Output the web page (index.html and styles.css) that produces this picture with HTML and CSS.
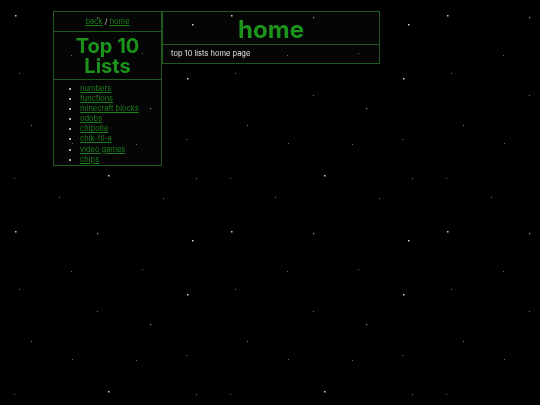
FILE: index.html
```html
<!DOCTYPE html>
<html lang="en">
<head>
<meta charset="utf-8">
<title>home</title>
<link rel="stylesheet" href="styles.css">
</head>
<body>
<svg class="sky" width="540" height="405" aria-hidden="true">
  <defs>
    <pattern id="stars" width="216" height="216" patternUnits="userSpaceOnUse">
      <rect x="15" y="15" width="1.5" height="1.5" fill="#d0d0d0"/>
      <rect x="97" y="17" width="1.2" height="1.2" fill="#999"/>
      <rect x="192" y="24" width="1.5" height="1.5" fill="#d0d0d0"/>
      <rect x="142" y="53" width="1" height="1" fill="#666"/>
      <rect x="71" y="55" width="1" height="1" fill="#666"/>
      <rect x="19" y="73" width="1" height="1" fill="#777"/>
      <rect x="187" y="78" width="1.5" height="1.5" fill="#d0d0d0"/>
      <rect x="97" y="95" width="1" height="1" fill="#777"/>
      <rect x="150" y="108" width="1.2" height="1.2" fill="#888"/>
      <rect x="31" y="125" width="1" height="1" fill="#777"/>
      <rect x="186" y="139" width="1" height="1" fill="#666"/>
      <rect x="72" y="143" width="1" height="1" fill="#666"/>
      <rect x="136" y="144" width="1" height="1" fill="#666"/>
      <rect x="108" y="175" width="1.5" height="1.5" fill="#d0d0d0"/>
      <rect x="14" y="178" width="1" height="1" fill="#666"/>
      <rect x="196" y="178" width="1" height="1" fill="#777"/>
      <rect x="59" y="197" width="1" height="1" fill="#777"/>
      <rect x="163" y="198" width="1" height="1" fill="#777"/>
    </pattern>
  </defs>
  <rect width="540" height="405" fill="url(#stars)"/>
</svg>
<div class="page">
  <aside class="sidebar">
    <nav class="crumbs"><a href="#">back</a> / <a href="#">home</a></nav>
    <div class="brand">Top 10 Lists</div>
    <ul class="lists">
      <li><a href="#">numbers</a></li>
      <li><a href="#">functions</a></li>
      <li><a href="#">minecraft blocks</a></li>
      <li><a href="#">odobs</a></li>
      <li><a href="#">chipotle</a></li>
      <li><a href="#">chik-fil-a</a></li>
      <li><a href="#">video games</a></li>
      <li><a href="#">chips</a></li>
    </ul>
  </aside>
  <main class="main">
    <h1 class="heading">home</h1>
    <p class="desc">top 10 lists home page</p>
  </main>
</div>
</body>
</html>
```

FILE: styles.css
```css
html, body {
  margin: 0;
  padding: 0;
  background: #000;
}
body {
  font-family: Inter, "DejaVu Sans", sans-serif;
  color: #e0e0e0;
  width: 540px;
  height: 405px;
  overflow: hidden;
}
.sky {
  position: fixed;
  left: 0;
  top: 0;
  z-index: 0;
}
.page {
  position: relative;
  z-index: 1;
  display: flex;
  align-items: flex-start;
  padding: 11px 0 0 53px;
}
.sidebar {
  width: 107px;
  border: 1px solid #1e5a1e;
  background: rgba(255, 255, 255, 0.02);
}
.crumbs {
  height: 19px;
  line-height: 19px;
  text-align: center;
  font-size: 7.5px;
  color: #cfcfcf;
  border-bottom: 1px solid #1e5a1e;
}
a {
  color: #1d801d;
  text-decoration: underline;
}
.brand {
  padding: 4px 0 3px;
  text-align: center;
  font-size: 20px;
  line-height: 20px;
  font-weight: 700;
  color: #1c941c;
  border-bottom: 1px solid #1e5a1e;
}
.lists {
  margin: 0;
  padding: 4px 0 0 26px;
  font-size: 7.5px;
  line-height: 10.1px;
  color: #e6e6e6;
}
.main {
  width: 216px;
  border: 1px solid #1e5a1e;
  background: rgba(255, 255, 255, 0.02);
}
.heading {
  margin: 0;
  height: 32px;
  line-height: 36px;
  text-align: center;
  font-size: 24px;
  font-weight: 700;
  color: #1c941c;
  border-bottom: 1px solid #1e5a1e;
}
.desc {
  margin: 0;
  height: 18px;
  line-height: 18px;
  padding-left: 8px;
  font-size: 7.5px;
  color: #e6e6e6;
}
```
